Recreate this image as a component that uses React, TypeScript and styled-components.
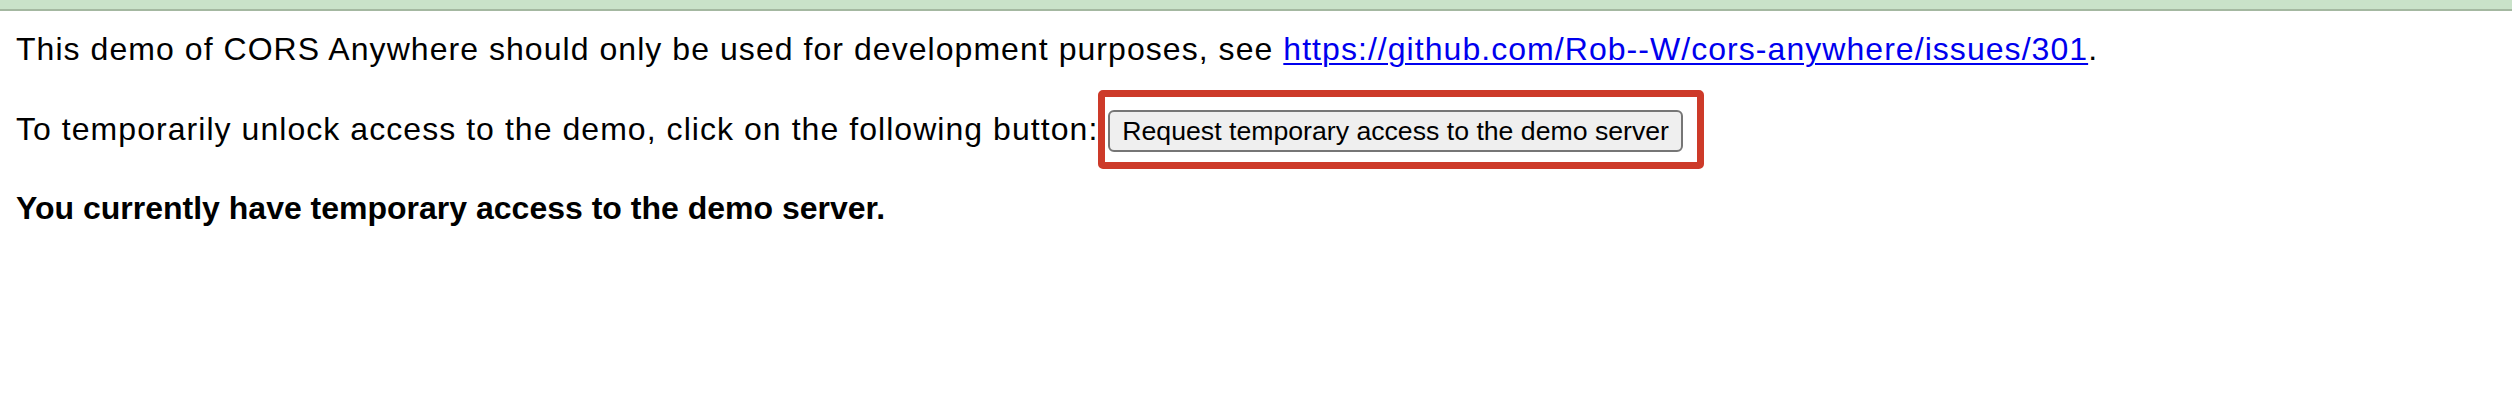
import React from "react";
import styled, { createGlobalStyle } from "styled-components";

const GlobalStyle = createGlobalStyle`
  html, body {
    margin: 0;
    padding: 0;
    background: #ffffff;
  }
  body {
    font-family: "Liberation Sans", Arial, Helvetica, sans-serif;
    font-size: 32px;
    color: #000000;
  }
`;

const TopBar = styled.div`
  height: 9px;
  background: #c9e2c9;
  border-bottom: 2px solid #a4b8a1;
`;

const Content = styled.main`
  display: flex;
  flex-direction: column;
  padding: 0 16px;
`;

const Paragraph = styled.p<{ $spaceAbove: number; $bold?: boolean }>`
  margin: ${(p) => p.$spaceAbove}px 0 0 0;
  line-height: 37px;
  font-size: 32px;
  font-weight: ${(p) => (p.$bold ? 700 : 400)};
  letter-spacing: ${(p) => (p.$bold ? "0px" : "1.05px")};
`;

const Link = styled.a`
  color: #0000ee;
  text-decoration: underline;
  text-underline-offset: 3px;
  text-decoration-thickness: 2px;
`;

const ButtonWrap = styled.span`
  position: relative;
  display: inline-block;
  letter-spacing: 0;
`;

const DemoButton = styled.button`
  font-family: "Liberation Sans", Arial, Helvetica, sans-serif;
  font-size: 26.67px;
  line-height: normal;
  letter-spacing: 0;
  height: 42px;
  padding: 2px 12px;
  margin: 0;
  color: #000000;
  background: #efefef;
  border: 2px solid #767676;
  border-radius: 6px;
  cursor: pointer;
`;

const Highlight = styled.span`
  position: absolute;
  top: -20px;
  left: -10px;
  right: -21px;
  bottom: -17px;
  border: 7px solid #cd3a29;
  border-radius: 5px;
  pointer-events: none;
`;

export default function App() {
  return (
    <>
      <GlobalStyle />
      <TopBar />
      <Content>
        <Paragraph $spaceAbove={20}>
          This demo of CORS Anywhere should only be used for development purposes, see{" "}
          <Link href="#">https://github.com/Rob--W/cors-anywhere/issues/301</Link>.
        </Paragraph>
        <Paragraph $spaceAbove={42}>
          To temporarily unlock access to the demo, click on the following button:{" "}
          <ButtonWrap>
            <DemoButton type="button">Request temporary access to the demo server</DemoButton>
            <Highlight />
          </ButtonWrap>
        </Paragraph>
        <Paragraph $spaceAbove={38} $bold>
          You currently have temporary access to the demo server.
        </Paragraph>
      </Content>
    </>
  );
}
